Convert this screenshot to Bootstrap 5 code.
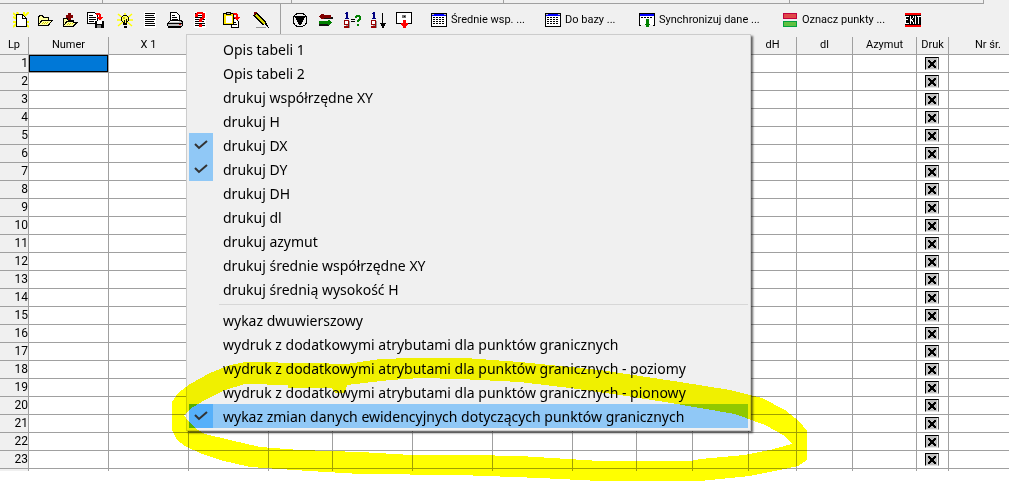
<!DOCTYPE html>
<html lang="pl">
<head>
<meta charset="utf-8">
<meta name="viewport" content="width=device-width, initial-scale=1">
<title>Wydruk punktów</title>
<link rel="stylesheet" href="https://cdn.jsdelivr.net/npm/bootstrap@5.3.0/dist/css/bootstrap.min.css">
<style>
  :root { --face: #f0f0f0; --line: #a0a0a0; }
  body { font: 11px/16px Roboto, "Liberation Sans", sans-serif; color: #000; background: #fff; overflow: hidden; }
  svg { shape-rendering: crispEdges; flex: none; display: block; }

  .fields { background: var(--face); }
  .fields div { height: 4px; border-right: 1px solid var(--line); border-bottom: 1px solid var(--line); }
  .f-a { width: 103px; } .f-b { width: 189px; } .f-c { width: 212px; } .f-d { width: 286px; } .f-e { width: 194px; }

  .tools { height: 33px; background: var(--face); padding-left: 8px; }
  .tools button { border: 0; background: none; padding: 0; height: 32px; color: #000; white-space: nowrap; }
  .tool { width: 25px; display: flex; align-items: center; justify-content: center; }
  .tool-lg { width: 30px; }
  .second { margin: 0 14px 0 6px; }
  .second .tool { width: 26px; }
  .split { width: 1px; height: 30px; background: var(--line); }
  .tools .action { display: flex; align-items: center; gap: 4px; }
  .w-avg { width: 114px; } .w-base { width: 94px; } .w-sync { width: 144px; } .w-mark { width: 122px; }

  .points { table-layout: fixed; width: 100%; border-collapse: separate; border-spacing: 0; }
  .points th, .points td { padding: 0; border: 0 solid var(--line); border-right-width: 1px; border-bottom-width: 1px; height: 18px; text-align: center; vertical-align: top; font-weight: 400; white-space: nowrap; overflow: hidden; line-height: 15px; }
  .points thead th { background: var(--face); }
  .points tbody th { background: var(--face); text-align: right; font-size: 12px; line-height: 16px; }
  .points tr > :last-child { border-right-width: 0; }
  .points thead th:last-child { padding-left: 18px; }
  .points tfoot td { height: 2px; border-bottom-width: 0; }
  .points tfoot td:first-child { background: var(--face); }
  .points .current { background: #0078d7; box-shadow: inset 0 0 0 1px #000; }
  .points input { appearance: none; display: block; margin: 2px 0 0 8px; width: 14px; height: 13px; border: 1px solid #000; border-right-color: #555; border-bottom-color: #e8e8e8;
    background: #c0c0c0 url("data:image/svg+xml,%3Csvg xmlns='http://www.w3.org/2000/svg' width='12' height='11' viewBox='0 0 12 11' shape-rendering='crispEdges'%3E%3Cpath d='M2 2h2v1H2zM8 2h2v1H8zM2 3h3v1H2zM7 3h3v1H7zM3 4h6v1H3zM4 5h4v2H4zM3 7h6v1H3zM2 8h3v1H2zM7 8h3v1H7zM2 9h2v1H2zM8 9h2v1H8z'/%3E%3Cpath fill='%23f0f0f0' d='M11 0h1v11h-1z'/%3E%3C/svg%3E") no-repeat; }

  .print-menu { top: 34px; left: 186px; width: 565px; padding: 2px; border: 1px solid #ccc; border-radius: 0; background: #f0f0f0; box-shadow: 2px 2px 2px rgba(0,0,0,.6); color: #000; }
  .print-menu .dropdown-item { display: flex; height: 24px; padding: 0; color: #000; font: 14px/26px "Noto Sans", "Open Sans", sans-serif; }
  .print-menu .tick { width: 24px; margin-right: 10px; display: flex; align-items: center; justify-content: center; flex: none; }
  .print-menu .on .tick { background: #90c8f6; }
  .print-menu .hot { background: #90c8f6; }
  .print-menu .hot .tick { background: #56b0fa; }
  .print-menu hr { margin: 3px 0 3px 30px; border-top: 1px solid #d7d7d7; opacity: 1; }
  .print-menu svg { shape-rendering: auto; }

  .marker { top: 0; left: 0; z-index: 1100; mix-blend-mode: multiply; pointer-events: none; }
</style>
</head>
<body>
<svg width="0" height="0" class="position-absolute" aria-hidden="true">
  <symbol id="grid" viewBox="0 0 16 14">
    <path d="M0 0h16v14H0z"/><path fill="#fff" d="M1 3h14v10H1z"/><path fill="#00f" d="M1 1h14v2H1z"/><path fill="#c0c0c0" d="M1 1h2v1H1zM13 1h2v1h-2z"/>
    <path stroke="#000" stroke-dasharray="2 1" d="M2 4.500h12M2 6.500h12M2 8.500h12M2 10.500h12"/>
  </symbol>
  <symbol id="nine" viewBox="0 0 7 16">
    <path fill="#000080" d="M2 0h2v6h1v1H1V6h1V2H1V1h1z"/><path fill="#999" d="M2 9h4v7H2z"/><path fill="#900" d="M0 8h5v8H0v-2h4v-1H0z"/><path fill="#fff" d="M1 9h3v3H1z"/>
  </symbol>
</svg>

<div class="fields d-flex"><div class="f-a"></div><div class="f-b"></div><div class="f-c"></div><div class="f-d"></div><div class="f-e"></div></div>

<div class="tools d-flex" role="toolbar" aria-label="Narzędzia">
  <button class="tool" aria-label="Nowy"><svg width="16" height="16"><path stroke="#ff0" stroke-width="2" shape-rendering="auto" d="M0 1l16 14M0 15L16 0M4 0l2 4M0 5l4 2M0 10h4M12 10h4M11 0v5"/><path fill="#fff" stroke="#000" d="M3.500 2.500h6l4 4v8h-10z"/><path fill="none" stroke="#000" d="M9.500 2v4.500h4"/></svg></button>
  <button class="tool" aria-label="Otwórz"><svg width="15" height="11"><path fill="#ffffa0" stroke="#000" d="M.5 9.500v-7l1-2h3l1 2h5v3h3.500l-3.500 4.500h-10z"/><path stroke="#000" fill="none" d="M1 9l3-3.500h7"/><path fill="#cc0" d="M5 7h1v1H5zM7 7h1v1H7zM9 7h1v1H9zM4 8h1v1H4zM6 8h1v1H6zM8 8h1v1H8z"/></svg></button>
  <button class="tool" aria-label="Dołącz"><svg width="15" height="14"><path fill="#ffffa0" stroke="#000" d="M.5 12.500v-7h4l1 2h5v2h3.500l-3.500 3.500h-10z"/><path stroke="#000" fill="none" d="M1 12l3-3.500h7"/><path fill="#cc0" d="M5 10h1v1H5zM7 10h1v1H7zM9 10h1v1H9zM4 11h1v1H4zM6 11h1v1H6z"/><path fill="#800000" d="M5 0h3v2h2v3H8v2H5V5H3V2h2z"/></svg></button>
  <button class="tool" aria-label="Zapisz"><svg width="17" height="16"><path fill="#fff" stroke="#000" d="M.5.500h7l3 3v8H.500z"/><path stroke="#000" d="M2 3.500h4M2 5.500h7M2 7.500h7M2 9.500h5"/><path fill="#f00" d="M9 1h4v1h1v3h2v1h-1v1h-1v1h-2V7h-1V6h-1V5h2V3H9z"/><path d="M8 9h9v7H8z"/><path fill="#fff" d="M10 9h5v3h-5z"/><path fill="#808080" d="M10 13h4v3h-4z"/></svg></button>
  <button class="tool ms-1" aria-label="Podpowiedź"><svg width="16" height="15"><path stroke="#ff0" stroke-width="1.500" shape-rendering="auto" d="M1 1l14 12M1 13L15 1M8 0v3M0 7h16"/><path fill="#ffff60" stroke="#000" d="M5.500 3.500l1-1h3l1 1 1 1v3l-2 2v1h-3v-1l-2-2v-3z"/><path d="M6 11h4v1H6zM7 13h3v2H7zM7 7h1v3H7zM9 6h1v3H9z"/><path fill="#cc0" d="M6 4h2v2H6z"/></svg></button>
  <button class="tool" aria-label="Lista"><svg width="12" height="16"><path fill="#fff" d="M0 0h12v16H0z"/><path stroke="#000" d="M1 1.500h10M1 3.500h9M1 5.500h10M1 7.500h10M1 9.500h9M1 11.500h10M1 13.500h10"/></svg></button>
  <button class="tool" aria-label="Drukuj"><svg width="16" height="16"><path fill="#fff" stroke="#000" d="M3.500 9v-8.500h6l3 3v6"/><path stroke="#000" d="M5 3.500h3M5 5.500h5M5 7.500h6"/><path fill="#c0c0c0" stroke="#000" d="M.5 11.500l3-3h11l1 2v3l-1 1H1.500l-1-1z"/><path stroke="#000" d="M0 11.500h15M1 15.500h13"/><path fill="#fff" d="M3 9h9v1H3z"/><path fill="#d00" d="M12 12h2v1h-2z"/></svg></button>
  <button class="tool" aria-label="Opcje wydruku" aria-expanded="true"><svg width="12" height="16"><path fill="#fff" d="M0 0h12v16H0z"/><path stroke="#000" d="M1 1.500h10M1 3.500h9M1 5.500h10M1 7.500h10M1 9.500h9M1 11.500h10M1 13.500h10"/><path fill="#f00" d="M3 0h6v1h2v5h-1v1H9v1H8v2H5V7h1V6h2V2H4v3H1V2h1V1h1zM5 12h3v3H5z"/></svg></button>
  <button class="tool tool-lg ms-1" aria-label="Wklej"><svg width="17" height="16"><path fill="#fff" stroke="#000" d="M8.500 6.500h4l3 3v6h-7z"/><path fill="#ffe800" stroke="#000" d="M.5 1.500h10v11H.500z"/><path fill="#fff" d="M3 4h6v7H3z"/><path fill="#c0c0c0" stroke="#000" d="M3.500.500h4v2h-4z"/><path fill="#f00" d="M10 1h4v1h1v3h2v1h-1v1h-1v1h-2V7h-1V6h-1V5h2V3h-2z"/><path stroke="#000" d="M10 10.500h3M10 12.500h4"/></svg></button>
  <button class="tool tool-lg" aria-label="Edytuj"><svg width="17" height="16"><path stroke="#000" stroke-width="5" d="M2 2l10 10"/><path stroke="#d8d800" stroke-width="2" d="M3 3l9 9"/><path fill="#800000" d="M1 0h3v1H3v1H2v1H1z"/><path d="M11 12l5 4-3-6z"/><path stroke="#999" d="M3 15.500h10"/></svg></button>
  <span class="split ms-1"></span>
  <div class="second d-flex">
    <button class="tool" aria-label="Filtr"><svg width="16" height="16"><circle cx="8" cy="8" r="7" fill="none" stroke="#000"/><path d="M3 4h10v2h-1v2h-1v2h-1v2H9v1H7v-1H6v-2H5V8H4V6H3z"/></svg></button>
    <button class="tool" aria-label="Zamień"><svg width="14" height="12"><path fill="#111" d="M2 3h12v2H2zM0 10h10v2H0z"/><path fill="#800000" d="M0 2h1V1h1V0h3v1h7v3H5v1H2V4H1V3H0z"/><path fill="green" d="M13 9h-1v1h-1v1H9v-1H0V7h9V6h2v1h1v1h1z"/></svg></button>
    <button class="tool" aria-label="Sprawdź numery"><svg width="17" height="16"><use href="#nine" width="7" height="16"/><path d="M7 7h4v1H7zM7 9h4v1H7z"/><path fill="green" d="M11 4h1V3h4v1h1v4h-1v1h-1v1h-2V8h1V7h1V5h-2v1h-2zM13 12h2v2h-2z"/></svg></button>
    <button class="tool" aria-label="Sortuj"><svg width="15" height="16"><use href="#nine" width="7" height="16"/><path d="M11 1h1v10h3v1h-1v2h-1v2h-2v-2h-1v-2H9v-1h2z"/></svg></button>
    <button class="tool" aria-label="Wstaw"><svg width="16" height="16"><path fill="#fff" stroke="#000" d="M5.500 11.500h-5v-11h15v11h-5"/><path fill="#777" d="M6 3h4v3H6z"/><path d="M8 4h1v1H8z"/><path fill="#f00" d="M7 8h3v3h2v2h-1v1h-1v2H7v-2H6v-1H5v-2h2z"/></svg></button>
  </div>
  <button class="action w-avg"><svg width="16" height="14"><use href="#grid"/></svg>Średnie wsp. ...</button>
  <button class="action w-base"><svg width="16" height="14"><use href="#grid"/></svg>Do bazy ...</button>
  <button class="action w-sync"><svg width="16" height="14"><path d="M0 0h16v13h-2v-1h1V3H1v9h1v1H0z"/><path fill="#fff" d="M1 3h14v9H1z"/><path fill="#00f" d="M1 1h14v2H1z"/><path stroke="#000" stroke-dasharray="2 1" d="M2 4.500h12"/><path fill="green" d="M7 6h3v5h1v1h-1v2H7v-2H6v-1h1z"/></svg>Synchronizuj dane ...</button>
  <button class="action w-mark"><svg width="15" height="14"><path fill="#e04848" stroke="#c00040" d="M.5.500h13v5H.500z"/><path fill="#60c040" stroke="#00a040" d="M.5 8.500h13v5H.500z"/></svg>Oznacz punkty ...</button>
  <button class="action" aria-label="Zamknij"><svg width="16" height="14"><path d="M0 0h16v14H0z"/><path fill="#f00" d="M0 0h16v2H0zM0 12h16v2H0z"/><path stroke="#fff" fill="none" d="M4 3.500H.500v7H4M.5 6.500H3M5 3v2l3 4v2M8 3v2L5 9v2M10.500 3v8M12 3.500h4M13.500 3v8"/></svg></button>
</div>

<table class="points">
  <colgroup id="cols"></colgroup>
  <thead><tr id="heads"></tr></thead>
  <tbody id="rows"></tbody>
  <tfoot><tr id="foot"></tr></tfoot>
</table>

<div class="print-menu dropdown-menu show" id="menu"></div>

<svg class="marker position-absolute" width="820" height="483" aria-hidden="true">
  <path fill="#ff0" fill-rule="evenodd" d="M172 402L178 393L190 384L210 373L230 365L245 362L310 363L347 364L380 359L411 358L465 358L520 362L600 370L680 382L730 390L762 398L785 410L800 422L807 431V460L798 466L780 470L750 476L720 479L700 481H600L540 478L460 475L360 474L310 471L250 467L220 460L200 453L185 446L177 440L172 430ZM184 415L190 409L205 400L225 390L245 384L288 385V388H332L335 393H345L347 385L390 380L420 378L460 379L520 382L570 388L620 395L665 402L700 408L735 414L765 425L785 436L792 444L770 450L745 455L700 459L690 461H600L520 456L470 455H412L360 452L300 450L260 447L230 440L205 434L195 428L188 421Z"/>
</svg>

<script>
  const columns = [['Lp',29],['Numer',80],['X 1',80],['Y 1',80],['H 1',64],['X 2',80],['Y 2',80],['H 2',80],['dX',64],['dY',56],['',56],['dH',48],['dl',56],['Azymut',64],['Druk',32],['Nr śr.',0]];
  const put = (id, html) => document.getElementById(id).innerHTML = html;
  put('cols', columns.map(([, w]) => w ? `<col style="width:${w}px">` : '<col>').join(''));
  put('heads', columns.map(([t], i) => `<th scope="col">${i > 2 && i < 11 ? '' : t}</th>`).join(''));
  put('foot', '<td></td>'.repeat(columns.length));
  put('rows', Array.from({ length: 23 }, (_, r) => `<tr><th scope="row">${r + 1}</th>` + columns.slice(1).map(([t], c) =>
    t === 'Druk' ? `<td><input type="checkbox" checked aria-label="Druk ${r + 1}"></td>` : `<td${r + c ? '' : ' class="current"'}></td>`).join('') + '</tr>').join(''));

  const items = ['Opis tabeli 1', 'Opis tabeli 2', 'drukuj współrzędne XY', 'drukuj H', '+drukuj DX', '+drukuj DY', 'drukuj DH', 'drukuj dl', 'drukuj azymut', 'drukuj średnie współrzędne XY', 'drukuj średnią wysokość H', '-',
    'wykaz dwuwierszowy', 'wydruk z dodatkowymi atrybutami dla punktów granicznych', 'wydruk z dodatkowymi atrybutami dla punktów granicznych - poziomy', 'wydruk z dodatkowymi atrybutami dla punktów granicznych - pionowy', '*wykaz zmian danych ewidencyjnych dotyczących punktów granicznych'];
  const tick = '<svg width="14" height="10"><path fill="none" stroke="#333" stroke-width="2" d="M1 4l4 4 8-7"/></svg>';
  put('menu', items.map(t => {
    if (t === '-') return '<hr>';
    const on = /^[+*]/.test(t);
    return `<button class="dropdown-item${on ? ' on' : ''}${t[0] === '*' ? ' hot' : ''}"><span class="tick">${on ? tick : ''}</span>${t.replace(/^[+*]/, '')}</button>`;
  }).join(''));
</script>
<script src="https://cdn.jsdelivr.net/npm/bootstrap@5.3.0/dist/js/bootstrap.bundle.min.js"></script>
</body>
</html>
